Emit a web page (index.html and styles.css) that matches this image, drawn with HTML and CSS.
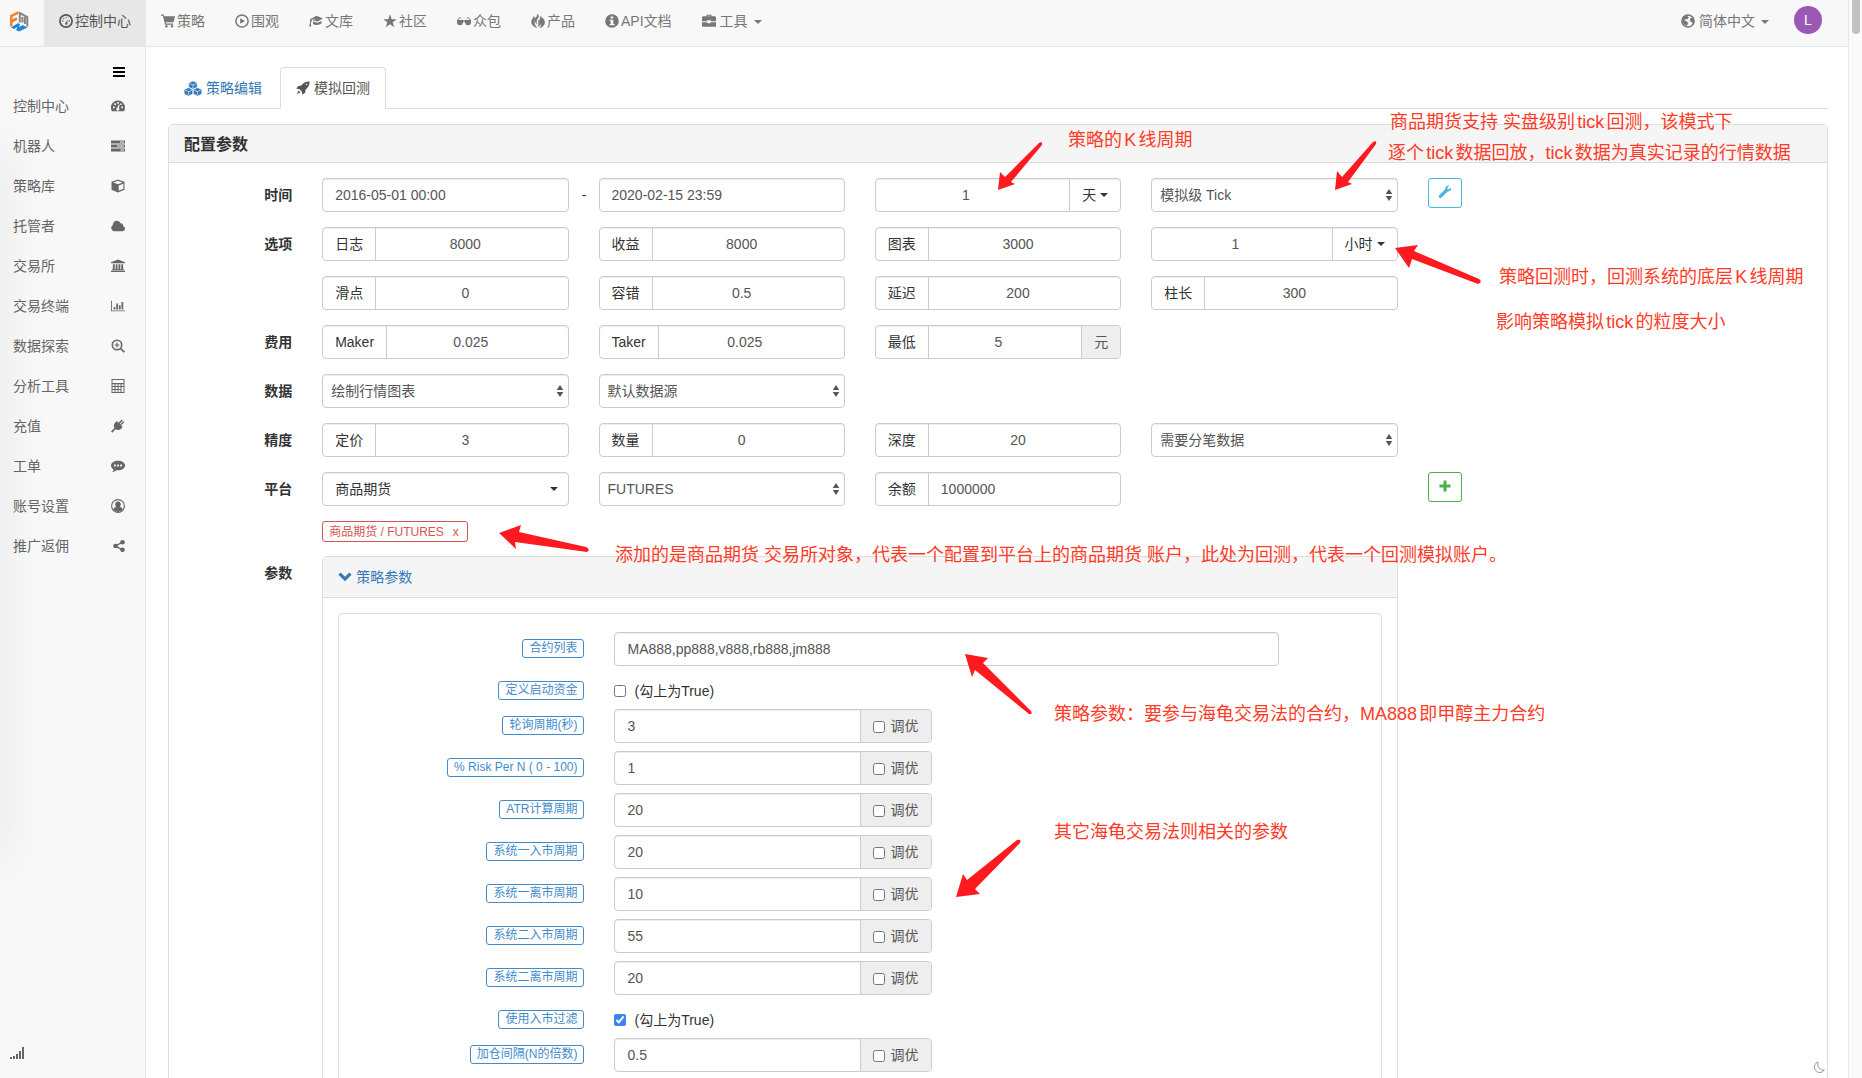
FILE: index.html
```html
<!DOCTYPE html>
<html lang="zh-CN">
<head>
<meta charset="utf-8">
<title>模拟回测</title>
<link rel="stylesheet" href="styles.css">
</head>
<body>
<svg class="sprite" aria-hidden="true">
  <symbol id="i-dash" viewBox="0 0 14 14"><circle cx="7" cy="7" r="6.100" fill="none" stroke="currentColor" stroke-width="1.700"/><path d="M6.200 9.500a1.200 1.200 0 1 0 1.800-.9L9.600 5 6.900 8.200z"/><circle cx="3.700" cy="7" r=".7"/><circle cx="4.700" cy="4.600" r=".7"/><circle cx="7" cy="3.600" r=".7"/><circle cx="10.300" cy="7" r=".7"/></symbol>
  <symbol id="i-cart" viewBox="0 0 14 14"><path d="M0 .5h2.600l.6 1.700H14l-1.400 6H4.800l.3 1.300h7v1.200H4.100L1.900 1.700H0z"/><circle cx="5.400" cy="12.200" r="1.200"/><circle cx="11" cy="12.200" r="1.200"/></symbol>
  <symbol id="i-play" viewBox="0 0 14 14"><circle cx="7" cy="7" r="6.100" fill="none" stroke="currentColor" stroke-width="1.500"/><path d="M5.200 4.200 10 7l-4.800 2.800z"/></symbol>
  <symbol id="i-grad" viewBox="0 0 14 14"><path d="M7.500 1.800 14 4.600 8.500 7.500 3.500 6.200 8 4.600 2.600 5.700V8L1.800 8.600 2.200 12.500H.2L1 8.600V5.200z"/><path d="M4 7.500 8.500 8.800l4-1.900v2.400c-1.500 1.700-6 2.400-8.500.6z"/></symbol>
  <symbol id="i-star" viewBox="0 0 14 14"><path d="m7 .2 1.700 5h5L9.700 8.300l1.500 5L7 10.200l-4.200 3.100 1.500-5L.3 5.200h5z"/></symbol>
  <symbol id="i-glasses" viewBox="0 0 14 14"><path d="M0 6h6l1 .7L8 6h6v2.500c-.3 1.800-1 2.800-2.900 2.800-2 0-2.800-1.300-3.200-3.300H6.100c-.4 2-1.200 3.300-3.200 3.300C1 11.300.3 10.300 0 8.500z"/><path d="M.5 6.500 2.500 3.800h1.300M13.500 6.500l-2-2.700h-1.300" fill="none" stroke="currentColor"/></symbol>
  <symbol id="i-fire" viewBox="0 0 14 14"><path d="M6.500 0C8 2 7.500 3.500 6.300 5 5 6.500 5 8 6 9.500c-1.500-.5-2.300-2-2-3.800C2.500 7.500 3 10.500 5.500 13.500 2 12.500.3 10 .6 7.500.8 5.300 2.500 4.500 2.800 2.500 3.500 3.300 3.600 4 3.500 4.800 5.500 3.500 6.500 2 6.500 0z" stroke="currentColor" stroke-width=".6"/><path d="M9 2.500c3 1.300 4.700 3.500 4.500 6.300-.2 2.500-2 4.200-4.700 4.900 1.700-1.700 2-3.200 1.400-5-.4 1.800-1.300 3-3.200 3.600C9 9.500 7 8 7.500 6.200c.4.6.9.9 1.500.9C8.300 5.500 10 4.500 9 2.500z" stroke="currentColor" stroke-width=".6"/></symbol>
  <symbol id="i-info" viewBox="0 0 14 14"><path fill-rule="evenodd" d="M7 .2a6.800 6.800 0 1 1 0 13.600A6.800 6.800 0 0 1 7 .2zM5.700 2.500v2h2.600v-2zM4.700 5.700v1.200h1v3h-1v1.300h4.800V9.900h-1.200V5.700z"/></symbol>
  <symbol id="i-case" viewBox="0 0 14 14"><path fill-rule="evenodd" d="M4.500 2.200V.8h5v1.400H13l1 1V7.200H9V6.200H5v1H0v-4l1-1zM5.500 2.200h3v-.5h-3zM0 8.200h5.500v1h3v-1H14v4.600H0z"/></symbol>
  <symbol id="i-globe" viewBox="0 0 14 14"><circle cx="7" cy="7" r="6.100" fill="none" stroke="currentColor" stroke-width="1.500"/><path d="M2 3.500C3.500 1.500 5.500 1 7.500 1.500L6.500 3l1.500.5L6 5.500 4.500 5 3.500 6.500 6 7.500l1 1.500-1 3C3 11 1 9 1.300 6zM9.500 4l2.500-.5 1 3.500-1 3-1.500-2L9 7z"/></symbol>
  <symbol id="i-cubes" viewBox="0 0 17 14"><g stroke="#fff" stroke-width=".6"><path d="m8.500-.2 4 1.800v4.300L8.500 7.700 4.500 5.900V1.600z"/><path d="M4.300 6.100 8.400 8v4.200L4.300 14.200.1 12.200V8zM12.700 6.100 16.900 8v4.200l-4.200 2-4.100-2V8z"/><path d="m5.200 2.200 3.300 1.500 3.300-1.500M8.500 3.700V7M1 8.400l3.400 1.500 3.400-1.500M4.400 9.900v3.300M9.200 8.400l3.400 1.500L16 8.400M12.600 9.900v3.300" fill="none"/></g></symbol>
  <symbol id="i-rocket" viewBox="0 0 14 14"><path fill-rule="evenodd" d="M13.500.5c.3 3.500-1.200 6-4 8.300l-.3 3-2.900 1.900-.4-2.900-2.700-2.700-3-.4L2.200 4.900l3-.3C7.500 1.700 10 .3 13.500.5zM10.600 2.700a.8.800 0 1 0 0 1.600.8.800 0 0 0 0-1.600z"/><path d="m2.500 9.500 2 2L1 13z"/></symbol>
  <symbol id="i-tacho" viewBox="0 0 14 14"><path fill-rule="evenodd" d="M7 1.500a7 7 0 0 1 7 7c0 1.300-.3 2.600-1 3.700H1a7 7 0 0 1 6-10.700zM2 7.500v1.800h1.700V7.500zM3.300 4.300V6H5V4.300zM6.200 3v1.700h1.600V3zM7.800 5.500 6.300 8.700a1.500 1.500 0 1 0 1.500.2L8.700 5.800zM10.300 7.500v1.800H12V7.500zM9.300 4.500v1.400h1.500V4.500z"/></symbol>
  <symbol id="i-server" viewBox="0 0 14 14"><path fill-rule="evenodd" d="M0 1.500h14v3H0zM9 2.500v1h4v-1zM0 5.500h14v3H0zM6 6.500v1h7v-1zM0 9.500h14v3H0zM9.500 10.500v1H13v-1z"/></symbol>
  <symbol id="i-cube" viewBox="0 0 14 14"><path fill-rule="evenodd" d="m7 .5 6.500 2.300v8L7 13.500.5 10.800v-8zM7 1.800 2.300 3.500 7 5.200l4.700-1.700zM7.700 6.400v5.300l4.700-1.900V4.700z"/></symbol>
  <symbol id="i-cloud" viewBox="0 0 15 14"><path d="M3.500 12.500a3.400 3.400 0 0 1-1.600-6.300C1.900 3.500 3.800 1.500 6.200 1.500c1.900 0 3.400 1.100 4 2.700 1.900-.4 3.100 1.100 2.600 2.700 1.300.4 2.200 1.500 2.200 2.700 0 1.600-1.200 2.900-2.900 2.900z"/></symbol>
  <symbol id="i-bank" viewBox="0 0 15 14"><path d="M7.500 0 15 3v1H0V3zM2 5h2v5.500h1V5h2v5.500h1V5h2v5.500h1V5h2v5.500h1v1H1v-1h1zM0 12.200h15v1.300H0z"/></symbol>
  <symbol id="i-bars" viewBox="0 0 16 14"><path d="M0 1h1v11h15v1H0zM3 8h2v3H3zM6 4h2v7H6zM9 6h2v5H9zM12 2.500h2V11h-2z"/></symbol>
  <symbol id="i-zoom" viewBox="0 0 14 14"><circle cx="6" cy="6" r="4.700" fill="none" stroke="currentColor" stroke-width="1.600"/><path d="m9 10 1-1 4 3.500-1.400 1.300zM5.400 3.600h1.200v1.800h1.800v1.200H6.600v1.800H5.400V6.600H3.600V5.400h1.800z"/></symbol>
  <symbol id="i-calc" viewBox="0 0 14 14"><path fill-rule="evenodd" d="M.5 0h13v14H.5zM1.500 1v3h11V1zM1.500 5.200v1.900h2V5.200zm3 0v1.900h2V5.200zm3 0v1.900h2V5.200zm3 0v1.900h2V5.200zM1.500 8v2h2V8zm3 0v2h2V8zm3 0v2h2V8zm3 0v5h2V8zM1.500 11v2h2v-2zm3 0v2h2v-2zm3 0v2h2v-2z"/></symbol>
  <symbol id="i-plug" viewBox="0 0 14 14"><path d="m13.300 3.200-3.200 3.100 1.400 1.400c-1.300 3-4.300 4-6.900 2.600L1.300 13.800 0 12.600l3.400-3.500C2.200 6.500 3.300 3.700 6 2.300l1.500 1.400L10.700.5l1.100 1.100-3.100 3.200.5.600 3-3.200z"/></symbol>
  <symbol id="i-chat" viewBox="0 0 14 14"><path fill-rule="evenodd" d="M7 1.700c3.900 0 7 2.100 7 4.800s-3.100 4.800-7 4.800c-.6 0-1.100 0-1.600-.1-1.200 1.100-2.700 1.700-4.200 1.700.8-.7 1.300-1.500 1.400-2.500C1 9.500 0 8.100 0 6.500c0-2.700 3.100-4.800 7-4.800zM3 5.600v1.800h1.800V5.600zm3.100 0v1.800h1.800V5.600zm3.100 0v1.800H11V5.600z"/></symbol>
  <symbol id="i-user" viewBox="0 0 14 14"><circle cx="7" cy="7" r="6.400" fill="none" stroke="currentColor" stroke-width="1.100"/><path d="M7 2.500c1.700 0 2.800 1.200 2.800 2.900 0 1-.4 2-1 2.700 1.500.4 2.600 1 3 2.400A6 6 0 0 1 7 13a6 6 0 0 1-4.800-2.500c.4-1.400 1.500-2 3-2.400-.6-.7-1-1.700-1-2.700 0-1.700 1.100-2.900 2.800-2.900z"/></symbol>
  <symbol id="i-share" viewBox="0 0 14 14"><circle cx="11.500" cy="3.200" r="2.300"/><circle cx="11.500" cy="10.800" r="2.300"/><circle cx="4.500" cy="7" r="2.300"/><path d="m11.500 3.200-7 3.800 7 3.800" fill="none" stroke="currentColor" stroke-width="1.400"/></symbol>
  <symbol id="i-wrench" viewBox="0 0 14 14"><path d="M12.900 2.600 11 4.300 9.600 3.900 9.300 2.700 11.300.7C9.300 0 7.100 1.500 7.300 4L1 10.600C0 12 1.800 14 3.300 12.800L9.700 6.500c2.600.3 4-1.800 3.200-3.900z"/></symbol>
  <symbol id="i-chev" viewBox="0 0 14 14"><path d="M2.600 2.500 7 6.700l4.400-4.200L13.600 4.700 7 11.200.4 4.700z"/></symbol>
  <symbol id="i-updown" viewBox="0 0 8 12"><path d="M4 0 7.300 5H.7zM4 12 .7 7h6.600z"/></symbol>
</svg>

<div class="app">
  <header class="navbar">
    <a class="logo" href="#" aria-label="首页">
      <svg width="20" height="22" viewBox="0 0 20 22"><path fill="none" stroke="#f0842c" stroke-width="2.600" d="M2.300 16.500V6l7-3.700M2.300 11.500 8 8.500"/><path fill="none" stroke="#858585" stroke-width="2" d="M10.800 12.500V3l7.500 4v9.500M13.400 12.500V7M15.900 14V7"/><path fill="#1f87cf" d="M2 17.500 9 13l2 1.300-1 3L13.500 15l5 2.500-8.500 4-3-1.500 1.500-3L5 19z"/></svg>
    </a>
    <nav class="nav">
      <a class="active" href="#"><svg class="ic"><use href="#i-dash"/></svg>控制中心</a>
      <a href="#"><svg class="ic"><use href="#i-cart"/></svg>策略</a>
      <a href="#"><svg class="ic"><use href="#i-play"/></svg>围观</a>
      <a href="#"><svg class="ic"><use href="#i-grad"/></svg>文库</a>
      <a href="#"><svg class="ic"><use href="#i-star"/></svg>社区</a>
      <a href="#"><svg class="ic"><use href="#i-glasses"/></svg>众包</a>
      <a href="#"><svg class="ic"><use href="#i-fire"/></svg>产品</a>
      <a href="#"><svg class="ic"><use href="#i-info"/></svg>API文档</a>
      <a class="wide" href="#"><svg class="ic"><use href="#i-case"/></svg>工具<span class="caret"></span></a>
    </nav>
    <nav class="nav right">
      <a class="wide" href="#"><svg class="ic"><use href="#i-globe"/></svg>简体中文<span class="caret"></span></a>
      <a class="avatar" href="#">L</a>
    </nav>
  </header>

  <div class="columns">
    <aside class="sidebar">
      <button class="burger" aria-label="菜单"><span></span><span></span><span></span></button>
      <nav class="menu">
        <a href="#">控制中心<svg class="ic"><use href="#i-tacho"/></svg></a>
        <a href="#">机器人<svg class="ic"><use href="#i-server"/></svg></a>
        <a href="#">策略库<svg class="ic"><use href="#i-cube"/></svg></a>
        <a href="#">托管者<svg class="ic"><use href="#i-cloud"/></svg></a>
        <a href="#">交易所<svg class="ic"><use href="#i-bank"/></svg></a>
        <a href="#">交易终端<svg class="ic"><use href="#i-bars"/></svg></a>
        <a href="#">数据探索<svg class="ic"><use href="#i-zoom"/></svg></a>
        <a href="#">分析工具<svg class="ic"><use href="#i-calc"/></svg></a>
        <a href="#">充值<svg class="ic"><use href="#i-plug"/></svg></a>
        <a href="#">工单<svg class="ic"><use href="#i-chat"/></svg></a>
        <a href="#">账号设置<svg class="ic"><use href="#i-user"/></svg></a>
        <a href="#">推广返佣<svg class="ic"><use href="#i-share"/></svg></a>
      </nav>
      <svg class="signal" width="14" height="12" viewBox="0 0 14 12"><path d="M0 10h2v2H0zM3 9h2v3H3zM6 7h2v5H6zM9 4h2v8H9zM12 0h2v12h-2z"/></svg>
    </aside>

    <main class="main">
      <nav class="tabs">
        <a href="#"><svg class="ic cubes"><use href="#i-cubes"/></svg>策略编辑</a>
        <a class="active" href="#"><svg class="ic"><use href="#i-rocket"/></svg>模拟回测</a>
      </nav>

      <section class="panel">
        <h1 class="panel-title">配置参数</h1>
        <form class="config">
          <div class="row">
            <label class="row-label" for="start">时间</label>
            <div class="cell range"><input class="control" id="start" value="2016-05-01 00:00"></div>
            <div class="cell"><input class="control" aria-label="结束时间" value="2020-02-15 23:59"></div>
            <div class="cell"><div class="group"><input class="mid" aria-label="K线周期" value="1"><button type="button" class="unit">天<span class="caret"></span></button></div></div>
            <div class="cell"><div class="select"><select aria-label="回测模式"><option>模拟级 Tick</option></select><svg><use href="#i-updown"/></svg></div></div>
            <div class="cell"><button type="button" class="square info" aria-label="设置"><svg class="ic"><use href="#i-wrench"/></svg></button></div>
          </div>
          <div class="row">
            <label class="row-label" for="log">选项</label>
            <div class="cell"><div class="group"><label for="log">日志</label><input class="mid" id="log" value="8000"></div></div>
            <div class="cell"><div class="group"><label for="profit">收益</label><input class="mid" id="profit" value="8000"></div></div>
            <div class="cell"><div class="group"><label for="chart">图表</label><input class="mid" id="chart" value="3000"></div></div>
            <div class="cell"><div class="group"><input class="mid" aria-label="底层K线周期" value="1"><button type="button" class="unit">小时<span class="caret"></span></button></div></div>
          </div>
          <div class="row">
            <span class="row-label"></span>
            <div class="cell"><div class="group"><label for="slip">滑点</label><input class="mid" id="slip" value="0"></div></div>
            <div class="cell"><div class="group"><label for="fault">容错</label><input class="mid" id="fault" value="0.5"></div></div>
            <div class="cell"><div class="group"><label for="delay">延迟</label><input class="mid" id="delay" value="200"></div></div>
            <div class="cell"><div class="group"><label for="bar">柱长</label><input class="mid" id="bar" value="300"></div></div>
          </div>
          <div class="row">
            <label class="row-label" for="maker">费用</label>
            <div class="cell"><div class="group"><label for="maker">Maker</label><input class="mid" id="maker" value="0.025"></div></div>
            <div class="cell"><div class="group"><label for="taker">Taker</label><input class="mid" id="taker" value="0.025"></div></div>
            <div class="cell"><div class="group"><label for="least">最低</label><input class="mid" id="least" value="5"><span class="addon">元</span></div></div>
          </div>
          <div class="row">
            <label class="row-label" for="data">数据</label>
            <div class="cell"><div class="select"><select id="data"><option>绘制行情图表</option></select><svg><use href="#i-updown"/></svg></div></div>
            <div class="cell"><div class="select"><select aria-label="数据源"><option>默认数据源</option></select><svg><use href="#i-updown"/></svg></div></div>
          </div>
          <div class="row">
            <label class="row-label" for="price">精度</label>
            <div class="cell"><div class="group"><label for="price">定价</label><input class="mid" id="price" value="3"></div></div>
            <div class="cell"><div class="group"><label for="amount">数量</label><input class="mid" id="amount" value="0"></div></div>
            <div class="cell"><div class="group"><label for="depth">深度</label><input class="mid" id="depth" value="20"></div></div>
            <div class="cell"><div class="select"><select aria-label="分笔数据"><option>需要分笔数据</option></select><svg><use href="#i-updown"/></svg></div></div>
          </div>
          <div class="row">
            <label class="row-label" for="platform">平台</label>
            <div class="cell"><button type="button" class="control dropdown" id="platform">商品期货<span class="caret"></span></button></div>
            <div class="cell"><div class="select"><select aria-label="交易对"><option>FUTURES</option></select><svg><use href="#i-updown"/></svg></div></div>
            <div class="cell"><div class="group"><label for="balance">余额</label><input id="balance" value="1000000"></div></div>
            <div class="cell"></div>
            <div class="cell"><button type="button" class="square add" aria-label="添加"><svg class="ic" viewBox="0 0 14 14"><path d="M5.500 1.500h3v4h4v3h-4v4h-3v-4h-4v-3h4z"/></svg></button></div>
          </div>
          <div class="row tag-row">
            <span class="row-label"></span>
            <div class="cell"><button type="button" class="tag danger">商品期货 / FUTURES<span>x</span></button></div>
          </div>
          <div class="row">
            <span class="row-label">参数</span>
            <div class="cell params">
              <section class="panel">
                <h2 class="params-title"><a href="#"><svg class="ic"><use href="#i-chev"/></svg>策略参数</a></h2>
                <div class="params-body">
                  <div class="param-list">
                    <div class="param"><label for="p1"><span class="tag">合约列表</span></label><div class="field long"><input class="control" id="p1" value="MA888,pp888,v888,rb888,jm888"></div></div>
                    <div class="param"><label for="p2"><span class="tag">定义启动资金</span></label><div class="field check"><input type="checkbox" id="p2"><label for="p2">(勾上为True)</label></div></div>
                    <div class="param"><label for="p3"><span class="tag">轮询周期(秒)</span></label><div class="field group"><input id="p3" value="3"><label class="addon"><input type="checkbox">调优</label></div></div>
                    <div class="param"><label for="p4"><span class="tag">% Risk Per N ( 0 - 100)</span></label><div class="field group"><input id="p4" value="1"><label class="addon"><input type="checkbox">调优</label></div></div>
                    <div class="param"><label for="p5"><span class="tag">ATR计算周期</span></label><div class="field group"><input id="p5" value="20"><label class="addon"><input type="checkbox">调优</label></div></div>
                    <div class="param"><label for="p6"><span class="tag">系统一入市周期</span></label><div class="field group"><input id="p6" value="20"><label class="addon"><input type="checkbox">调优</label></div></div>
                    <div class="param"><label for="p7"><span class="tag">系统一离市周期</span></label><div class="field group"><input id="p7" value="10"><label class="addon"><input type="checkbox">调优</label></div></div>
                    <div class="param"><label for="p8"><span class="tag">系统二入市周期</span></label><div class="field group"><input id="p8" value="55"><label class="addon"><input type="checkbox">调优</label></div></div>
                    <div class="param"><label for="p9"><span class="tag">系统二离市周期</span></label><div class="field group"><input id="p9" value="20"><label class="addon"><input type="checkbox">调优</label></div></div>
                    <div class="param"><label for="p10"><span class="tag">使用入市过滤</span></label><div class="field check"><input type="checkbox" id="p10" checked><label for="p10">(勾上为True)</label></div></div>
                    <div class="param"><label for="p11"><span class="tag">加仓间隔(N的倍数)</span></label><div class="field group"><input id="p11" value="0.5"><label class="addon"><input type="checkbox">调优</label></div></div>
                  </div>
                </div>
              </section>
            </div>
          </div>
        </form>
      </section>
    </main>
  </div>
</div>
<div class="rail"><div class="thumb"></div></div>
<svg class="moon" width="12" height="13" viewBox="0 0 12 13"><path d="M5 1a5.400 5.400 0 1 0 6.300 8C7.500 9.800 3.700 6 5 1z" fill="none" stroke="#999"/></svg>

<!-- Annotations drawn over the page -->
<svg class="arrows" width="1840" height="1000" aria-hidden="true">
  <path d="M998 190 1000 172 1005 177 1039 143Q1043 141 1042 145L1011 182 1015 184z"/>
  <path d="M1335 190 1337 171 1342 177 1373 142Q1377 140 1376 144L1348 182 1352 184z"/>
  <path d="M1395 248 1418 245 1414 251 1479 279Q1483 282 1478 284L1412 259 1409 268z"/>
  <path d="M499 533 521 525 519 532 586 547Q591 550 587 552L515 542 516 549z"/>
  <path d="M965 654 988 658 983 663 1031 711Q1033 715 1029 714L975 670 972 677z"/>
  <path d="M956 897 963 874 967 880 1017 840Q1022 839 1020 843L975 889 980 894z"/>
</svg>
<p class="note n1">策略的K线周期</p>
<p class="note n2">商品期货支持 实盘级别tick回测，该模式下</p>
<p class="note n3">逐个tick数据回放，tick数据为真实记录的行情数据</p>
<p class="note n4">策略回测时，回测系统的底层K线周期</p>
<p class="note n5">影响策略模拟tick的粒度大小</p>
<p class="note n6">添加的是商品期货 交易所对象，代表一个配置到平台上的商品期货 账户，此处为回测，代表一个回测模拟账户。</p>
<p class="note n7">策略参数：要参与海龟交易法的合约，MA888即甲醇主力合约</p>
<p class="note n8">其它海龟交易法则相关的参数</p>
</body>
</html>
```

FILE: styles.css
```css
* { box-sizing: border-box; }

body {
  margin: 0;
  display: flex;
  height: 100vh;
  overflow: hidden;
  position: relative;
  background: #fff;
  color: #333;
  font: 14px/20px "Liberation Sans", "Noto Sans CJK SC", sans-serif;
}
a { color: #337ab7; text-decoration: none; }
input, select, button { font: inherit; color: #555; margin: 0; }
.sprite { position: absolute; width: 0; height: 0; }
.ic { width: 14px; height: 14px; fill: currentColor; flex: none; color: inherit; }
.caret {
  display: inline-block;
  border: 4px solid transparent;
  border-top-color: currentColor;
  border-bottom: 0;
}

.app { flex: 1; min-width: 0; display: flex; flex-direction: column; }

/* Top bar */
.navbar {
  flex: none;
  display: flex;
  height: 47px;
  background: #f8f8f8;
  border-bottom: 1px solid #e7e7e7;
}
.logo { width: 44px; padding: 10px 9px; }
.nav { display: flex; }
.nav a {
  display: flex;
  align-items: center;
  gap: 2px;
  padding: 0 15px 5px;
  color: #777;
}
.nav a.active { background: #e7e7e7; color: #555; }
.nav a.wide { gap: 4px; }
.nav .caret { margin: 2px 0 0 2px; }
.nav.right { margin-left: auto; align-items: center; }
.nav.right .wide { height: 100%; }
.nav a.avatar {
  width: 28px;
  height: 28px;
  margin: 0 26px 6px 10px;
  padding: 0;
  justify-content: center;
  border-radius: 50%;
  background: #9b59b6;
  color: #fff;
}

/* Sidebar */
.columns { flex: 1; min-height: 0; display: flex; }
.sidebar {
  flex: none;
  width: 146px;
  position: relative;
  overflow: hidden;
  display: flex;
  flex-direction: column;
  background: #f8f8f8;
  border-right: 1px solid #e7e7e7;
}
.sidebar::before {
  content: "";
  position: absolute;
  left: -10px;
  top: 100px;
  bottom: 220px;
  width: 10px;
  box-shadow: 0 0 40px rgba(0, 0, 0, .16);
}
.burger {
  align-self: flex-end;
  display: grid;
  gap: 2px;
  width: 12px;
  margin: 20px 20px 9px 0;
  padding: 0;
  border: 0;
  background: none;
}
.burger span { height: 2px; background: #000; }
.menu a {
  display: flex;
  align-items: center;
  justify-content: space-between;
  height: 40px;
  padding: 0 20px 0 13px;
  color: #666;
}
.signal { margin: auto 0 19px 10px; fill: #666; }

/* Tabs */
.main { flex: 1; min-width: 0; overflow: hidden; padding: 20px 20px 0 22px; }
.tabs { display: flex; gap: 2px; border-bottom: 1px solid #ddd; margin-bottom: 15px; }
.tabs a {
  display: flex;
  align-items: center;
  gap: 4px;
  height: 42px;
  margin-bottom: -1px;
  padding: 0 15px;
  border: 1px solid transparent;
  border-radius: 4px 4px 0 0;
}
.tabs .cubes { width: 18px; height: 15px; }
.tabs a.active { background: #fff; border-color: #ddd; border-bottom-color: #fff; color: #555; }

/* Panels */
.panel { border: 1px solid #ddd; border-radius: 4px; }
.panel-title {
  margin: 0;
  padding: 10px 15px 7px;
  border-bottom: 1px solid #ddd;
  background: #f5f5f5;
  font-size: 16px;
  line-height: 20px;
}
.config { padding: 15px 0; }
.row {
  display: grid;
  grid-template-columns: 1fr 2fr 2fr 2fr 2fr 3fr;
  margin-bottom: 15px;
}
.row-label { padding: 7px 15px 0; text-align: right; font-weight: bold; }
.cell { min-width: 0; padding: 0 15px; position: relative; }
.range::after { content: "-"; position: absolute; right: -3px; top: 7px; }
.params { grid-column: 2 / 6; }

/* Controls */
.control, .group, .select {
  display: flex;
  width: 100%;
  height: 34px;
  border: 1px solid #ccc;
  border-radius: 4px;
  background: #fff;
  box-shadow: inset 0 1px 1px rgba(0, 0, 0, .075);
}
.control { padding: 0 12px; }
.dropdown { align-items: center; justify-content: space-between; padding-right: 10px; color: #333; }
.group { overflow: hidden; }
.group > input {
  flex: 1;
  min-width: 0;
  padding: 0 12px;
  border: 0;
  background: none;
}
.group > .mid { padding-right: 25px; text-align: center; }
.group > label:not(.addon) { padding: 6px 12px; border-right: 1px solid #ccc; }
.unit {
  display: flex;
  align-items: center;
  gap: 4px;
  padding: 0 12px;
  border: 0;
  border-left: 1px solid #ccc;
  background: none;
  color: #333;
}
.addon {
  display: flex;
  align-items: center;
  padding: 0 12px;
  border-left: 1px solid #ccc;
  background: #eee;
  color: #555;
}
.select { position: relative; }
.select select {
  appearance: none;
  width: 100%;
  padding: 0 24px 0 8px;
  border: 0;
  background: none;
}
.select svg {
  position: absolute;
  right: 4px;
  top: 10px;
  width: 8px;
  height: 12px;
  fill: #555;
  pointer-events: none;
}
.square {
  display: grid;
  place-items: center;
  width: 34px;
  height: 30px;
  padding: 0 0 2px;
  border: 1px solid;
  border-radius: 3px;
  background: #fff;
}
.info { color: #46b8da; }
.add { color: #4cae4c; }

.tag {
  display: inline-block;
  height: 19px;
  padding: 0 6px;
  border: 1px solid #428bca;
  border-radius: 3px;
  background: #fff;
  color: #428bca;
  font-size: 12px;
  line-height: 16px;
  white-space: nowrap;
}
.tag-row { height: 20px; }
.tag.danger { display: block; height: 21px; border-color: #d9534f; color: #d9534f; }
.danger span { margin: 0 2px 0 9px; }

/* Strategy parameters */
.params-title {
  margin: 0;
  padding: 10px 15px;
  border-bottom: 1px solid #ddd;
  background: #f5f5f5;
  font-size: 14px;
  font-weight: normal;
  line-height: 20px;
}
.params-title a { display: flex; align-items: center; gap: 4px; }
.params-body { padding: 15px; }
.param-list {
  display: grid;
  gap: 8px;
  padding: 18px 0;
  border: 1px solid #ddd;
  border-radius: 4px;
}
.param { display: grid; grid-template-columns: 3fr 4fr 4fr 1fr; }
.param > label { padding: 7px 15px 0; text-align: right; line-height: 0; }
.param .field { margin: 0 15px; width: auto; }
.param .long { grid-column: 2 / 4; }
.check { display: flex; align-items: center; gap: 8px; height: 27px; padding-top: 7px; }
input[type="checkbox"] { width: 12px; height: 12px; accent-color: #3b82f6; }
.addon input { margin: 2px 6px 0 0; }

/* Window edge */
.rail { flex: none; width: 14px; padding-left: 3px; background: #fafafa; border-left: 1px solid #e7e7e7; }
.thumb { width: 8px; height: 34px; border-radius: 0 0 4px 4px; background: #c1c1c1; }
.moon { position: absolute; right: 37px; bottom: 4px; }

/* Annotations */
.arrows { position: absolute; left: 0; top: 0; fill: #ff1a20; pointer-events: none; }
.note {
  position: absolute;
  margin: 0;
  color: #ff3b28;
  font-size: 18px;
  line-height: 24px;
  text-autospace: normal;
  white-space: nowrap;
}
.n1 { left: 1068px; top: 128px; }
.n2 { left: 1390px; top: 110px; }
.n3 { left: 1388px; top: 141px; }
.n4 { left: 1499px; top: 265px; }
.n5 { left: 1496px; top: 310px; }
.n6 { left: 615px; top: 543px; }
.n7 { left: 1054px; top: 702px; }
.n8 { left: 1054px; top: 820px; }
```
